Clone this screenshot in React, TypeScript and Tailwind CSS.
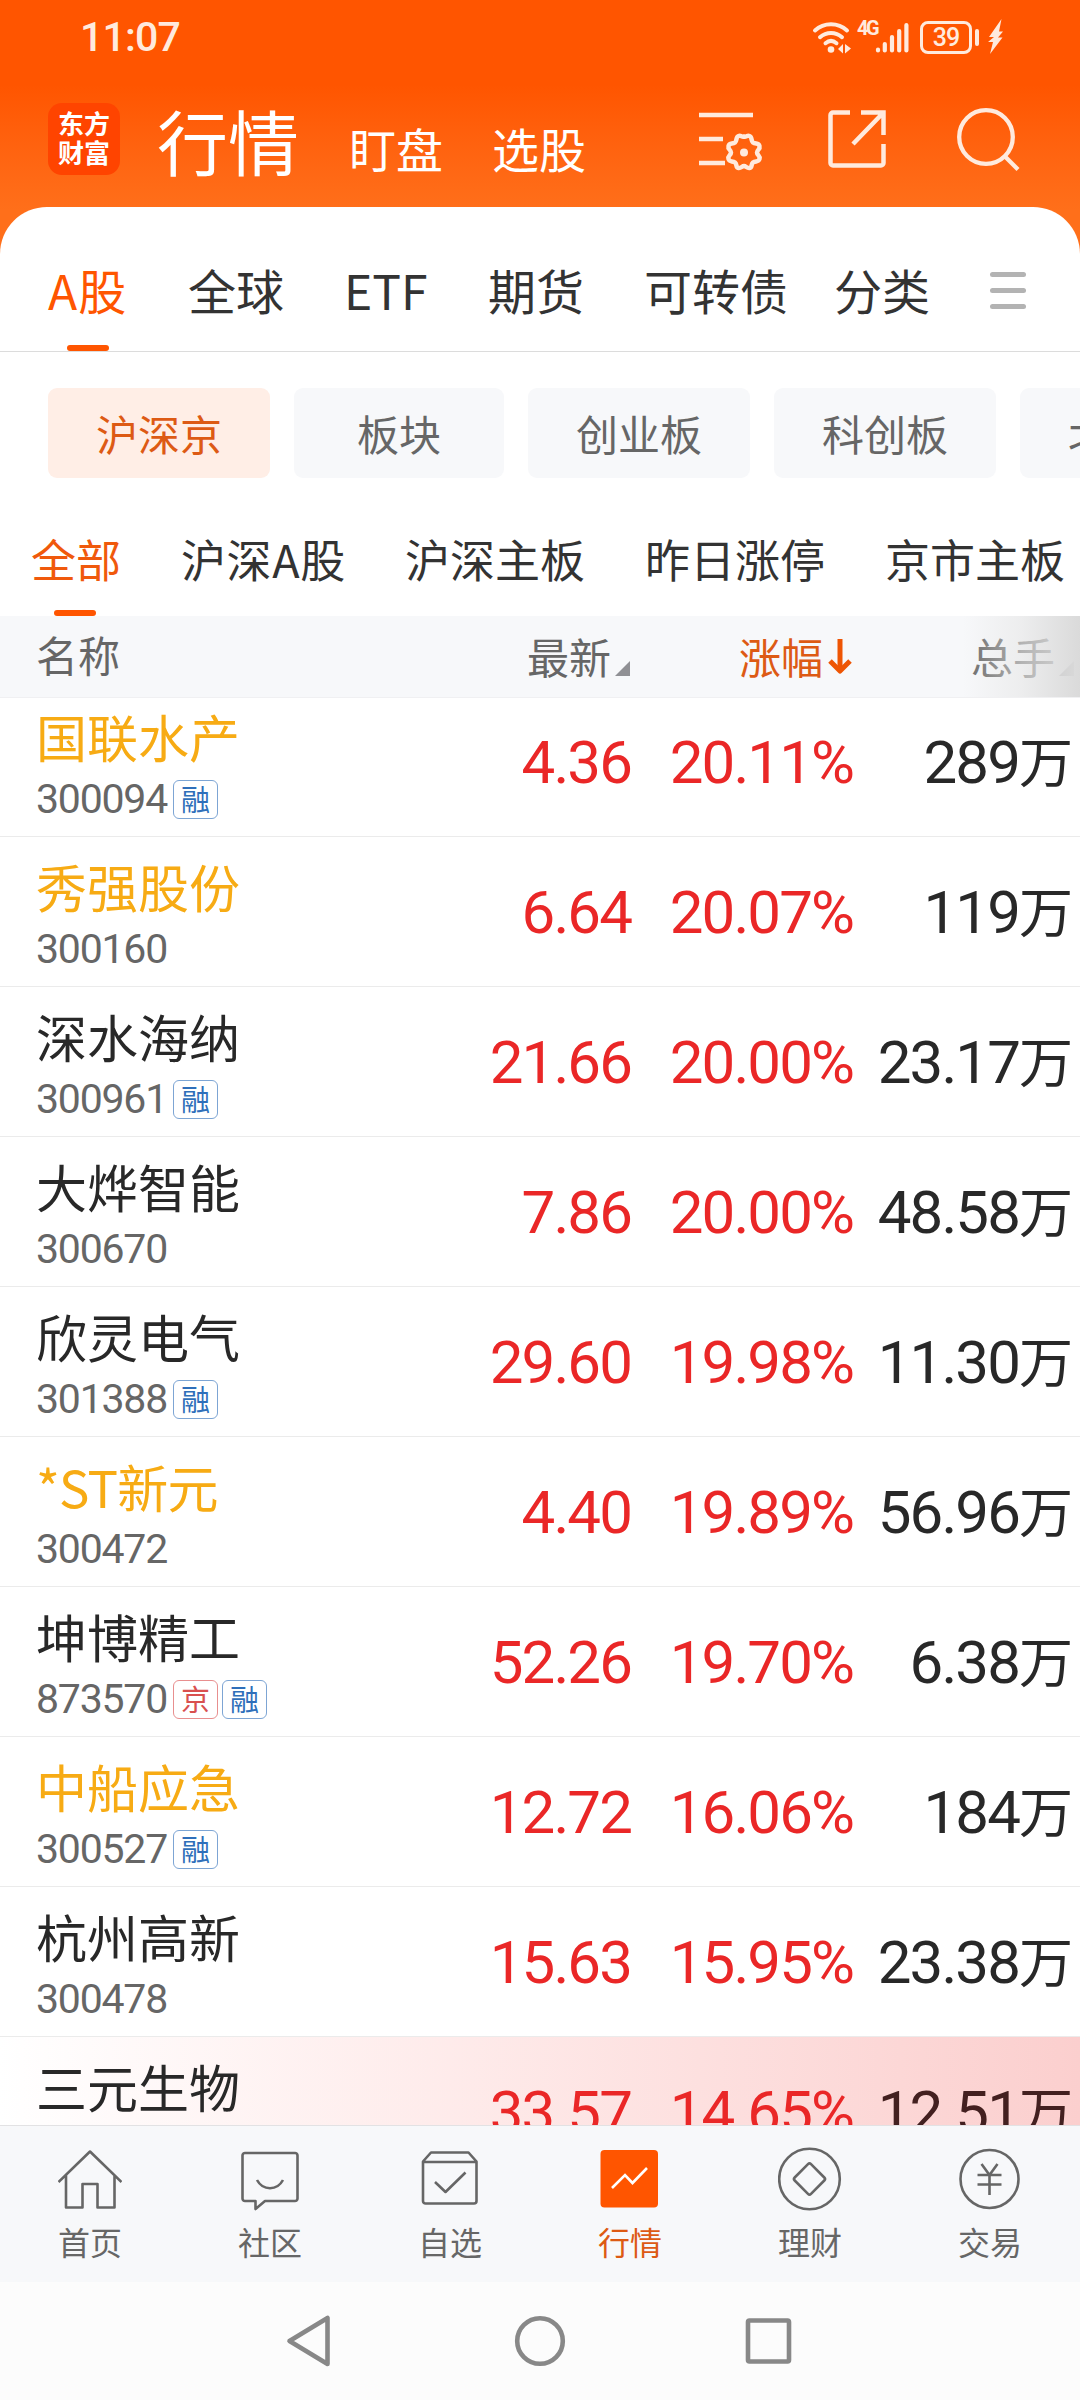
import clsx from 'clsx';
import { FC, ReactNode } from 'react';

type Stock = {
  name: string;
  code: string;
  price: string;
  change: string;
  volume: string;
  tags?: string[];
  watched?: boolean;
  flash?: boolean;
};

const stocks: Stock[] = [
  { name: '国联水产', code: '300094', price: '4.36', change: '20.11%', volume: '289', tags: ['融'], watched: true },
  { name: '秀强股份', code: '300160', price: '6.64', change: '20.07%', volume: '119', watched: true },
  { name: '深水海纳', code: '300961', price: '21.66', change: '20.00%', volume: '23.17', tags: ['融'] },
  { name: '大烨智能', code: '300670', price: '7.86', change: '20.00%', volume: '48.58' },
  { name: '欣灵电气', code: '301388', price: '29.60', change: '19.98%', volume: '11.30', tags: ['融'] },
  { name: '*ST新元', code: '300472', price: '4.40', change: '19.89%', volume: '56.96', watched: true },
  { name: '坤博精工', code: '873570', price: '52.26', change: '19.70%', volume: '6.38', tags: ['京', '融'] },
  { name: '中船应急', code: '300527', price: '12.72', change: '16.06%', volume: '184', tags: ['融'], watched: true },
  { name: '杭州高新', code: '300478', price: '15.63', change: '15.95%', volume: '23.38' },
  { name: '三元生物', code: '', price: '33.57', change: '14.65%', volume: '12.51', flash: true },
];

const StatusBar: FC = () => (
  <div className="flex h-[74px] items-center justify-between pr-[76px] pl-20 text-[#ffeadd]">
    <span className="mt-px font-[Roboto] text-[41px] leading-none font-medium tracking-[-0.8px]">
      11:07
    </span>
    <div className="flex items-center">
      <svg width="42" height="36" viewBox="0 0 42 36" fill="none" stroke="currentColor" strokeWidth="4" strokeLinecap="round">
        <path d="M4 11.5c9-8.2 23-8.2 32 0M9 18.2c6.4-5.6 15.6-5.6 22 0M14.5 24.2c3.4-2.8 7.6-2.8 11 0" />
        <circle cx="20" cy="30.5" r="3.3" fill="currentColor" stroke="none" />
        <path d="M27 30l5-5v9.5zM34 25l6 4.5-6 5z" fill="currentColor" stroke="none" />
      </svg>
      <span className="ml-1 w-[18px] -translate-y-[9px] font-[Roboto] text-[20px] leading-none font-bold tracking-[-2.5px]">
        4G
      </span>
      <svg width="34" height="36" viewBox="0 0 34 36" stroke="currentColor" strokeWidth="4.2" strokeLinecap="round">
        <path d="M3 30.5v1M9.800 25v6.500M17 18v13.500M24.200 12v19.500M31.400 6v25.500" />
      </svg>
      <div className="ml-[11px] flex h-[33px] w-[52px] items-center justify-center rounded-[8px] border-[3px] border-current font-[Roboto] text-[25px] leading-none font-medium tracking-[-1px]">
        39
      </div>
      <div className="ml-[3px] h-[17px] w-1 rounded-full bg-current" />
      <svg className="ml-2" width="17" height="36" viewBox="0 0 17 36" fill="currentColor">
        <path d="M14.500 0L2 18h5L1 23h5L3 35 15.500 18.500h-4.500l5-6h-4z" />
      </svg>
    </div>
  </div>
);

const Header: FC = () => (
  <div className="flex h-[133px] items-center pb-[3px] pl-12 text-white">
    <div className="flex size-[72px] flex-col items-center justify-center gap-[3px] rounded-[14px] bg-[#ff4400] pb-[3px] text-[26px] leading-[26px] font-bold">
      <span>东方</span>
      <span>财富</span>
    </div>
    <span className="ml-[37px] text-[71px] leading-none">行情</span>
    <span className="ml-[50px] pt-[17px] text-[47px] leading-none">盯盘</span>
    <span className="ml-[49px] pt-[17px] text-[47px] leading-none">选股</span>
    <div className="mr-[59px] ml-auto flex items-center gap-[65px] text-[#ffeadd]">
      <svg width="64" height="64" viewBox="0 0 64 64" fill="none" stroke="currentColor" strokeWidth="4.5">
        <path d="M0 8h54M0 32h24M0 56h26" />
        <path
          d="M45 29.500c2 1 3-1.500 5.500-0.500 3 1.200 1.200 4.500 3.500 6.500 2.500 2 5.500 0 6.500 3.500 1 3.500-2.500 3.500-2.500 6.500s3.500 3 2.500 6.500c-1 3.500-4 1.500-6.500 3.500-2.300 2-.5 5-3.500 5.500-2.500.5-3.500-2-5.500-2s-3 2.500-5.500 2c-3-.5-1.200-3.500-3.500-5.500-2.500-2-5.500 0-6.500-3.500-1-3.500 2.500-3.500 2.500-6.500s-3.500-3-2.500-6.500c1-3.500 4-1.500 6.500-3.500 2.300-2 .5-5.300 3.500-6.500 2.500-1 3.500 1.500 5.500.5z"
        />
        <circle cx="45" cy="45.500" r="4" fill="currentColor" stroke="none" />
      </svg>
      <svg width="60" height="60" viewBox="0 0 60 60" fill="none" stroke="currentColor" strokeWidth="4.5">
        <path d="M22 3.500H5a2.500 2.500 0 0 0-2.500 2.500v48a2.500 2.500 0 0 0 2.500 2.500h48a2.500 2.500 0 0 0 2.500-2.500V35M33 3.500h22.500V26M55 4L25 35" />
      </svg>
      <svg className="ml-1" width="64" height="66" viewBox="2 0 64 66" fill="none" stroke="currentColor" strokeWidth="4.3">
        <circle cx="31" cy="31" r="26.8" />
        <path d="M49.500 50L63 63.500" />
      </svg>
    </div>
  </div>
);

const MarketTabs: FC = () => (
  <div className="flex h-[145px] items-center border-b border-[#dcdcdc] pl-12 text-[48px] leading-none text-[#333]">
    <div className="relative flex h-full w-20 items-center text-[#ff5500]">
      <span className="mt-5 tracking-[1px]">A股</span>
      <div className="absolute bottom-0 left-[19px] h-1.5 w-[42px] rounded-full bg-[#ff5500]" />
    </div>
    <div className="mt-5 ml-[60px] flex items-center gap-[60px]">
      <span>全球</span>
      <span className="w-[84px]">ETF</span>
      <span>期货</span>
      <span>可转债</span>
    </div>
    <span className="mt-5 ml-[46px]">分类</span>
    <div className="mt-[23px] ml-[60px] flex w-9 flex-col gap-[11px]">
      <div className="h-[5px] rounded-full bg-[#b3b3b3]" />
      <div className="h-[5px] rounded-full bg-[#b3b3b3]" />
      <div className="h-[5px] rounded-full bg-[#b3b3b3]" />
    </div>
  </div>
);

const Chips: FC = () => (
  <div className="mt-9 flex gap-6 overflow-hidden pl-12 text-[42px] leading-none text-[#666]">
    {['沪深京', '板块', '创业板', '科创板', '北交所'].map((label, index) => (
      <div
        key={label}
        className={clsx(
          'flex h-[90px] shrink-0 items-center justify-center rounded-[9px] pb-px',
          label.length === 2 ? 'w-[210px]' : 'w-[222px]',
          index === 0 ? 'bg-[#ffeee6] text-[#dd5a14]' : 'bg-[#f7f8fa]',
        )}
      >
        {label}
      </div>
    ))}
  </div>
);

const BoardTabs: FC = () => (
  <div className="flex h-[138px] items-center gap-[60px] pl-[31px] text-[45px] leading-none whitespace-nowrap text-[#333]">
    <div className="relative flex h-full w-[90px] items-center text-[#f0590c]">
      <span className="mt-[22px]">全部</span>
      <div className="absolute bottom-0 left-[23px] h-1.5 w-[42px] rounded-full bg-[#ff5500]" />
    </div>
    <span className="mt-[22px] w-[164px] tracking-[0.6px]">沪深A股</span>
    <span className="mt-[22px]">沪深主板</span>
    <span className="mt-[22px]">昨日涨停</span>
    <span className="mt-[22px]">京市主板</span>
  </div>
);

const SortCorner: FC = () => (
  <svg className="mt-[25px] ml-1" width="15" height="15" viewBox="0 0 15 15">
    <path d="M15 0v15H0z" fill="#909094" />
  </svg>
);

const TableHead: FC = () => (
  <div className="relative flex h-[82px] items-center border-b border-[#f0f0f2] bg-[#f7f8fa] pr-1.5 pb-0.5 pl-9 text-[42px] leading-none text-[#666]">
    <span className="-mt-1">名称</span>
    <div className="ml-auto flex items-center">
      <span>最新</span>
      <SortCorner />
    </div>
    <div className="flex w-[222px] items-center justify-end text-[#dd5a14]">
      <span>涨幅</span>
      <svg className="mt-0.5 ml-[5px]" width="24" height="36" viewBox="0 0 24 36" fill="none" stroke="#ee5504" strokeWidth="5">
        <path d="M12 0v32" />
        <path d="M2 22l10 10 10-10" strokeLinejoin="round" />
      </svg>
    </div>
    <div className="flex w-[222px] items-center justify-end">
      <span>总手</span>
      <SortCorner />
    </div>
    <div className="absolute inset-y-0 right-0 w-[117px] bg-linear-to-r from-[#f7f8fa]/0 via-[#e6e6e6]/60 to-[#dadada]" />
  </div>
);

const Tag: FC<{ label: string }> = ({ label }) => (
  <span
    className={clsx(
      'flex h-[39px] w-[45px] items-center justify-center rounded-[6px] border pb-[3px] text-[29px] leading-none',
      label === '京'
        ? 'border-[#e88f8f] text-[#d9504f]'
        : 'border-[#7da5d4] text-[#2f6fba]',
    )}
  >
    {label}
  </span>
);

const StockRow: FC<{ stock: Stock }> = ({ stock }) => (
  <div
    className={clsx(
      'flex h-[150px] shrink-0 items-center border-b border-[#ebebeb] pr-[7px] pl-9 leading-none',
      stock.flash ? 'bg-linear-to-r from-white to-[#fbcfce]' : 'bg-white',
    )}
  >
    <div className="flex h-full flex-col pt-6">
      <span
        className={clsx(
          'text-[51px]',
          stock.watched ? 'text-[#f7ab14]' : 'text-[#282828]',
          stock.name.startsWith('*') && 'tracking-[-0.8px]',
        )}
      >
        {stock.name}
      </span>
      <div className="mt-[18px] flex h-[39px] items-center gap-1">
        <span className="w-[133px] font-[Roboto] text-[41px] tracking-[-1.2px] text-[#666]">
          {stock.code}
        </span>
        {stock.tags?.map((tag) => <Tag key={tag} label={tag} />)}
      </div>
    </div>
    <div className="mt-[3px] ml-auto flex items-center text-right font-[Roboto] text-[60px] tracking-[-1.9px] text-[#ea2727]">
      <span>{stock.price}</span>
      <span className="w-[222px]">{stock.change}</span>
    </div>
    <div
      className={clsx(
        'mt-[3px] flex w-[220px] items-center justify-end',
        stock.flash ? 'text-[#432020]' : 'text-[#282828]',
      )}
    >
      <span className="font-[Roboto] text-[60px] tracking-[-1.9px]">
        {stock.volume}
      </span>
      <span className="-mt-1.5 text-[54px]">万</span>
    </div>
  </div>
);

const NavIcon: FC<{ children: ReactNode }> = ({ children }) => (
  <svg width="64" height="64" viewBox="0 0 64 64" fill="none" stroke="#666" strokeWidth="2.6" strokeLinejoin="round">
    {children}
  </svg>
);

const navItems: { label: string; icon: ReactNode }[] = [
  {
    label: '首页',
    icon: (
      <path d="M.5 35L32 4.500 63.500 35M8 28v32.500h16.500V37h15v23.500H56.500V28" />
    ),
  },
  {
    label: '社区',
    icon: (
      <>
        <path d="M7 6h50a2.500 2.500 0 0 1 2.500 2.500v43a2.500 2.500 0 0 1-2.500 2.500H27l-9.500 8V54H7a2.500 2.500 0 0 1-2.500-2.500v-43A2.500 2.500 0 0 1 7 6z" />
        <path d="M19 33c6 11 20 11 26 0" />
      </>
    ),
  },
  {
    label: '自选',
    icon: (
      <>
        <path d="M5 14.500l8-9h37.500l8 9V54a2.500 2.500 0 0 1-2.500 2.500H7.500A2.500 2.500 0 0 1 5 54zM5 15h53.500" />
        <path d="M17 35l10.500 10L47.500 25.500" />
      </>
    ),
  },
  {
    label: '行情',
    icon: (
      <>
        <rect x="2.5" y="3" width="57.5" height="57.5" rx="4" fill="#ff5500" stroke="none" />
        <path d="M14 41l13-13 7.500 8L49 21" stroke="#fff" strokeLinejoin="miter" />
      </>
    ),
  },
  {
    label: '理财',
    icon: (
      <>
        <circle cx="31.5" cy="32" r="30.3" />
        <path d="M30 17.200q1.500-1.500 3 0l13.300 13.300q1.500 1.500 0 3L33 46.800q-1.500 1.500-3 0L16.700 33.500q-1.500-1.500 0-3z" />
      </>
    ),
  },
  {
    label: '交易',
    icon: (
      <>
        <circle cx="31.5" cy="32" r="29" />
        <path d="M23.500 17l8 11 8-11M19.500 28h24M19.500 37.500h24M31.500 28v20" />
      </>
    ),
  },
];

const BottomNav: FC = () => (
  <div className="flex h-[157px] border-t border-[#e2e2e4] bg-[#f7f8fa]">
    {navItems.map(({ label, icon }) => (
      <div
        key={label}
        className={clsx(
          'flex w-[180px] flex-col items-center pt-[21px] text-[32px] leading-none',
          label === '行情' ? 'text-[#dd5a14]' : 'text-[#666]',
        )}
      >
        <NavIcon>{icon}</NavIcon>
        <span className="mt-3.5">{label}</span>
      </div>
    ))}
  </div>
);

const SystemBar: FC = () => (
  <div className="flex h-[118px] items-center bg-[#fcfcfc] pl-[285px]">
    <svg width="510" height="54" viewBox="0 0 510 54" fill="none" stroke="#888" strokeWidth="4.6" strokeLinejoin="round">
      <path d="M42.500 4v46L4.500 27z" />
      <circle cx="255" cy="27" r="22.8" />
      <rect x="463" y="6.5" width="41" height="41" rx="1.5" />
    </svg>
  </div>
);

export default function App() {
  return (
    <div className="flex h-[2400px] w-[1080px] flex-col overflow-hidden bg-linear-to-b from-[#ff5500] from-[85px] to-[#ff6f1a] to-[210px] font-['Noto_Sans_CJK_SC',sans-serif]">
      <StatusBar />
      <Header />
      <div className="flex min-h-0 flex-1 flex-col rounded-t-[47px] bg-white">
        <MarketTabs />
        <Chips />
        <BoardTabs />
        <TableHead />
        <div className="flex min-h-0 flex-1 flex-col overflow-hidden">
          <div className="-mt-[11px]">
            {stocks.map((stock) => (
              <StockRow key={stock.name} stock={stock} />
            ))}
          </div>
        </div>
      </div>
      <BottomNav />
      <SystemBar />
    </div>
  );
}
